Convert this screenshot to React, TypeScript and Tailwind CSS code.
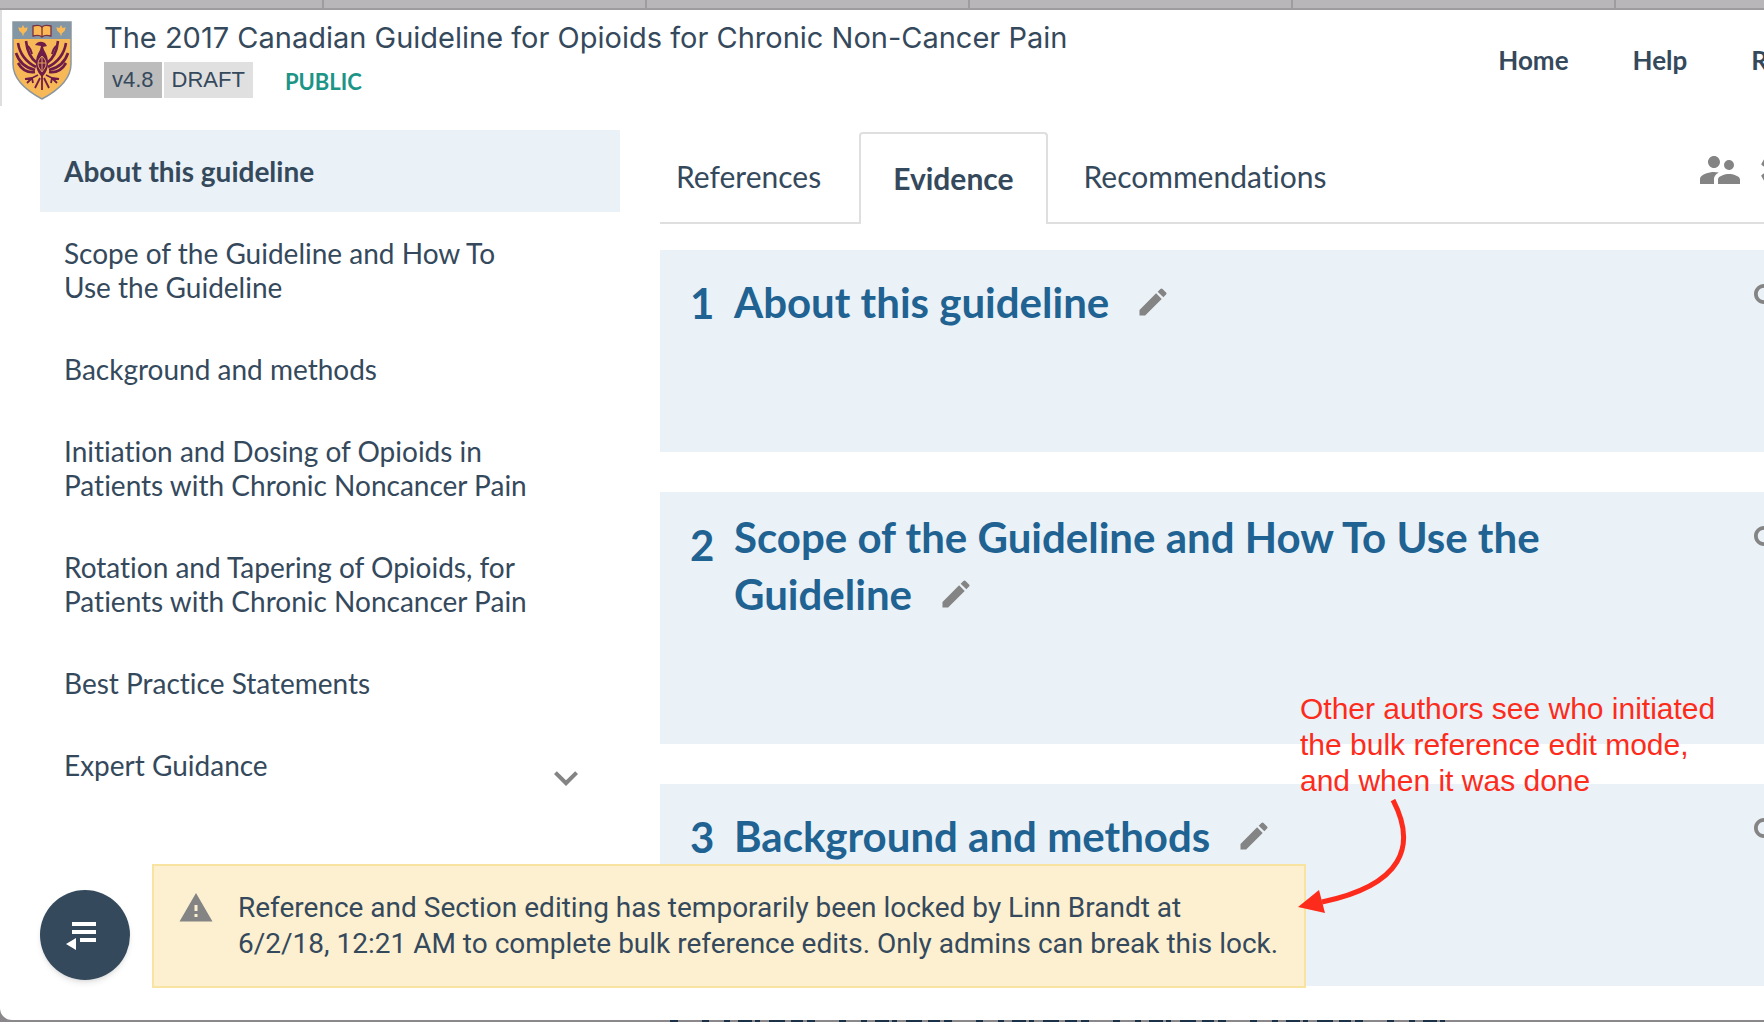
import type { ReactNode } from "react";
import {
  MdEdit,
  MdExpandMore,
  MdLink,
  MdSettings,
  MdSupervisorAccount,
  MdWarning,
} from "react-icons/md";

const outline = [
  { title: "About this guideline", active: true },
  { title: "Scope of the Guideline and How To Use the Guideline" },
  { title: "Background and methods" },
  { title: "Initiation and Dosing of Opioids in Patients with Chronic Noncancer Pain" },
  { title: "Rotation and Tapering of Opioids, for Patients with Chronic Noncancer Pain" },
  { title: "Best Practice Statements" },
  { title: "Expert Guidance", expandable: true },
];

const tabs = ["References", "Evidence", "Recommendations"];

const sections = [
  "About this guideline",
  "Scope of the Guideline and How To Use the Guideline",
  "Background and methods",
];

function BrowserTabStrip() {
  return (
    <div className="flex h-[10px] shrink-0 overflow-hidden border-b-2 border-[#9f9c9f] bg-[#b9b6b9] pl-px">
      {[0, 1, 2, 3, 4].map((i) => (
        <div key={i} className="w-[323px] shrink-0 border-r-2 border-[#9f9c9f]" />
      ))}
    </div>
  );
}

function Crest() {
  return (
    <svg viewBox="0 0 60 79" className="h-[79px] w-[60px] shrink-0" aria-label="University crest">
      <path d="M1 1h58v42c0 16-14 27-29 35C15 70 1 59 1 43z" fill="#f7b957" />
      <path d="M1 1h58v17H1z" fill="#8296a6" />
      <path d="M21 5c4-1 7-1 9 1 2-2 5-2 9-1v10c-4-1-7-1-9 1-2-2-5-2-9-1z" fill="#fbb955" stroke="#7a3040" strokeWidth="1.3" />
      <path d="M30 6v10" stroke="#7a3040" strokeWidth="1.3" />
      <path d="M11 4l1.6 3 3-.8-.8 3.5-3 2.8-.3 2h-1l-.3-2-3-2.8-.8-3.5 3 .8zM49 4l1.6 3 3-.8-.8 3.5-3 2.8-.3 2h-1l-.3-2-3-2.8-.8-3.5 3 .8z" fill="#fbb955" />
      <g fill="none" stroke="#6f1d48">
        <path d="M25 42C18 37 15 30 14 20M24 46C14 41 8 34 6 22M23 49C14 47 7 41 4 32M23 51c-7 1-13-2-17-9M35 42c7-5 10-12 11-22M36 46c10-5 16-12 18-24M37 49c9-2 16-8 19-17M37 51c7 1 13-2 17-9" strokeWidth="2.6" />
        <path d="M20 33c-1-4-2-6-4-8M40 33c1-4 2-6 4-8" strokeWidth="2" />
        <path d="M26 54l-6 3-7 1M34 54l6 3 7 1M20 57l-5 5M20 57l1 5M40 57l5 5M40 57l-1 5M30 54v15M28 57l-5 10M32 57l5 10" strokeWidth="1.8" />
      </g>
      <path d="M23 24c3-4 6-4 10-2l2 3-4 1 1 3c3 5 4 8 4 13 0 6-2 10-6 14-4-4-6-8-6-14 0-5 1-8 4-13l1-4z" fill="#6f1d48" />
      <path d="M30 35c3 3 4 5 4 8 0 3-2 5-4 8-2-3-4-5-4-8 0-3 1-5 4-8zM30 36v14M26 42h8" fill="none" stroke="#e0a05a" strokeWidth="1" />
      <path d="M1 1h58v42c0 16-14 27-29 35C15 70 1 59 1 43z" fill="none" stroke="#8b97a0" strokeWidth="1.5" />
    </svg>
  );
}

function Header() {
  return (
    <header className="flex h-24 shrink-0 justify-between border-l-2 border-[#dedede] pl-[10px]">
      <div className="flex pt-[11px]">
        <Crest />
        <div className="ml-8 whitespace-nowrap">
          <h1 className="font-['Inter'] text-[29px] leading-[34px]">
            The 2017 Canadian Guideline for Opioids for Chronic Non-Cancer Pain
          </h1>
          <div className="mt-[7px] flex h-9 items-center gap-[2px] font-['Liberation_Sans',sans-serif] text-[22px] leading-9">
            <span className="bg-[#bcbcbc] px-2">v4.8</span>
            <span className="bg-[#e0e0e0] px-2">DRAFT</span>
            <span className="ml-[30px] pt-1 font-['Lato'] font-bold text-[#1c9486]">PUBLIC</span>
          </div>
        </div>
      </div>
      <nav className="-mr-1 flex gap-16 pt-8 text-[26px] leading-9 font-bold whitespace-nowrap">
        <a href="#home">Home</a>
        <a href="#help">Help</a>
        <a href="#r">R</a>
      </nav>
    </header>
  );
}

function Sidebar() {
  return (
    <nav className="w-[580px] shrink-0">
      {outline.map((item) => (
        <a
          key={item.title}
          href="#section"
          className={
            item.active
              ? "flex bg-[#eaf1f7] px-6 py-6 font-bold"
              : "flex px-6 py-6"
          }
        >
          <span className="w-[470px]">{item.title}</span>
          {item.expandable && <MdExpandMore className="-my-2 mt-[6px] ml-2 size-12 text-[#848484]" />}
        </a>
      ))}
    </nav>
  );
}

function TabBar() {
  return (
    <div className="flex h-[94px] items-stretch">
      <div role="tablist" className="flex text-[30px] leading-9">
        {tabs.map((tab) =>
          tab === "Evidence" ? (
            <button
              key={tab}
              role="tab"
              aria-selected
              className="mt-[2px] rounded-t border-2 border-b-0 border-[#dfdfdf] px-8 pb-[2px] font-bold"
            >
              {tab}
            </button>
          ) : (
            <button
              key={tab}
              role="tab"
              aria-selected={false}
              className="border-b-2 border-[#dfdfdf] pr-[38px] pl-4 last:pl-9"
            >
              {tab}
            </button>
          ),
        )}
      </div>
      <div className="-mr-10 flex flex-1 items-start justify-end gap-3 border-b-2 border-[#dfdfdf] pt-4 text-[#848484]">
        <button aria-label="People">
          <MdSupervisorAccount className="size-12" />
        </button>
        <button aria-label="Settings">
          <MdSettings className="size-12" />
        </button>
      </div>
    </div>
  );
}

function Section({ number, children }: { number: number; children: ReactNode }) {
  return (
    <section className="flex bg-[#eaf1f7] pt-5 pb-[125px] pl-[30px] text-[42px] font-bold text-[#206291]">
      <span className="h-14 w-11 shrink-0 pt-[2px] leading-[62px]">{number}</span>
      <h2 className="w-[860px] leading-[50px]">
        {children}
        <button className="ml-[26px] inline-block pt-[14px] align-[-2px] text-[#848484]" aria-label="Edit">
          <MdEdit className="block size-9" />
        </button>
      </h2>
      <button className="-mr-[34px] ml-auto self-start text-[#848484]" aria-label="Link">
        <MdLink className="size-12" />
      </button>
    </section>
  );
}

function LockBanner() {
  return (
    <div className="absolute bottom-8 left-10 flex items-center">
      <button
        aria-label="Toggle outline"
        className="mt-[18px] flex size-[90px] items-center justify-center rounded-full bg-[#35495c] shadow-md"
      >
        <svg viewBox="0 0 38 30" className="h-[30px] w-[38px] fill-white">
          <path d="M6 2h24v4H6zM6 10h24v4H6zM14 18h16v4H14zM0 24l10-6v12z" />
        </svg>
      </button>
      <div
        role="alert"
        className="ml-[22px] flex border-2 border-[#f8e4a0] bg-[#fcf0d1] py-6 pr-[26px] pl-6 font-['Roboto'] text-[28px] leading-9"
      >
        <MdWarning className="size-9 shrink-0 text-[#848484]" />
        <p className="ml-6 whitespace-nowrap">
          Reference and Section editing has temporarily been locked by Linn Brandt at
          <br />
          6/2/18, 12:21 AM to complete bulk reference edits. Only admins can break this lock.
        </p>
      </div>
    </div>
  );
}

function Annotation() {
  return (
    <div className="absolute top-[691px] left-[1300px] font-['Liberation_Sans',sans-serif] text-[30px] leading-9 whitespace-nowrap text-[#fd2b1c]">
      <p>
        Other authors see who initiated
        <br />
        the bulk reference edit mode,
        <br />
        and when it was done
      </p>
      <svg viewBox="0 0 120 120" className="-ml-[2px] size-[120px]">
        <path d="M95 1C119 47 105 86 24 103" fill="none" stroke="currentColor" strokeWidth="5" />
        <path d="M0 108L21 91l6 23z" fill="currentColor" />
      </svg>
    </div>
  );
}

export default function App() {
  return (
    <div className="relative h-screen overflow-hidden bg-[#8a888b] font-['Lato',sans-serif] text-[28px] leading-[34px] text-[#35495c] [font-variant-ligatures:none]">
      <div className="relative flex h-[calc(100vh-2px)] flex-col overflow-hidden rounded-bl-xl bg-white">
        <BrowserTabStrip />
        <Header />
        <div className="flex gap-10 pt-6 pl-10">
          <Sidebar />
          <main className="min-w-0 flex-1">
            <TabBar />
            <div className="mt-[26px] flex flex-col gap-10">
              {sections.map((title, i) => (
                <Section key={title} number={i + 1}>
                  {title}
                </Section>
              ))}
            </div>
          </main>
        </div>
        <LockBanner />
      </div>
      {/* sliver of the dimmed window behind */}
      <svg className="ml-[670px] block h-[2px] w-[780px]" viewBox="0 0 780 2" aria-hidden>
        <path d="M0 1h780" stroke="#1a3148" strokeWidth="2" strokeDasharray="8 24 7 15 6 8 14 3 5 9 16 6 12 4" />
      </svg>
      <Annotation />
    </div>
  );
}
